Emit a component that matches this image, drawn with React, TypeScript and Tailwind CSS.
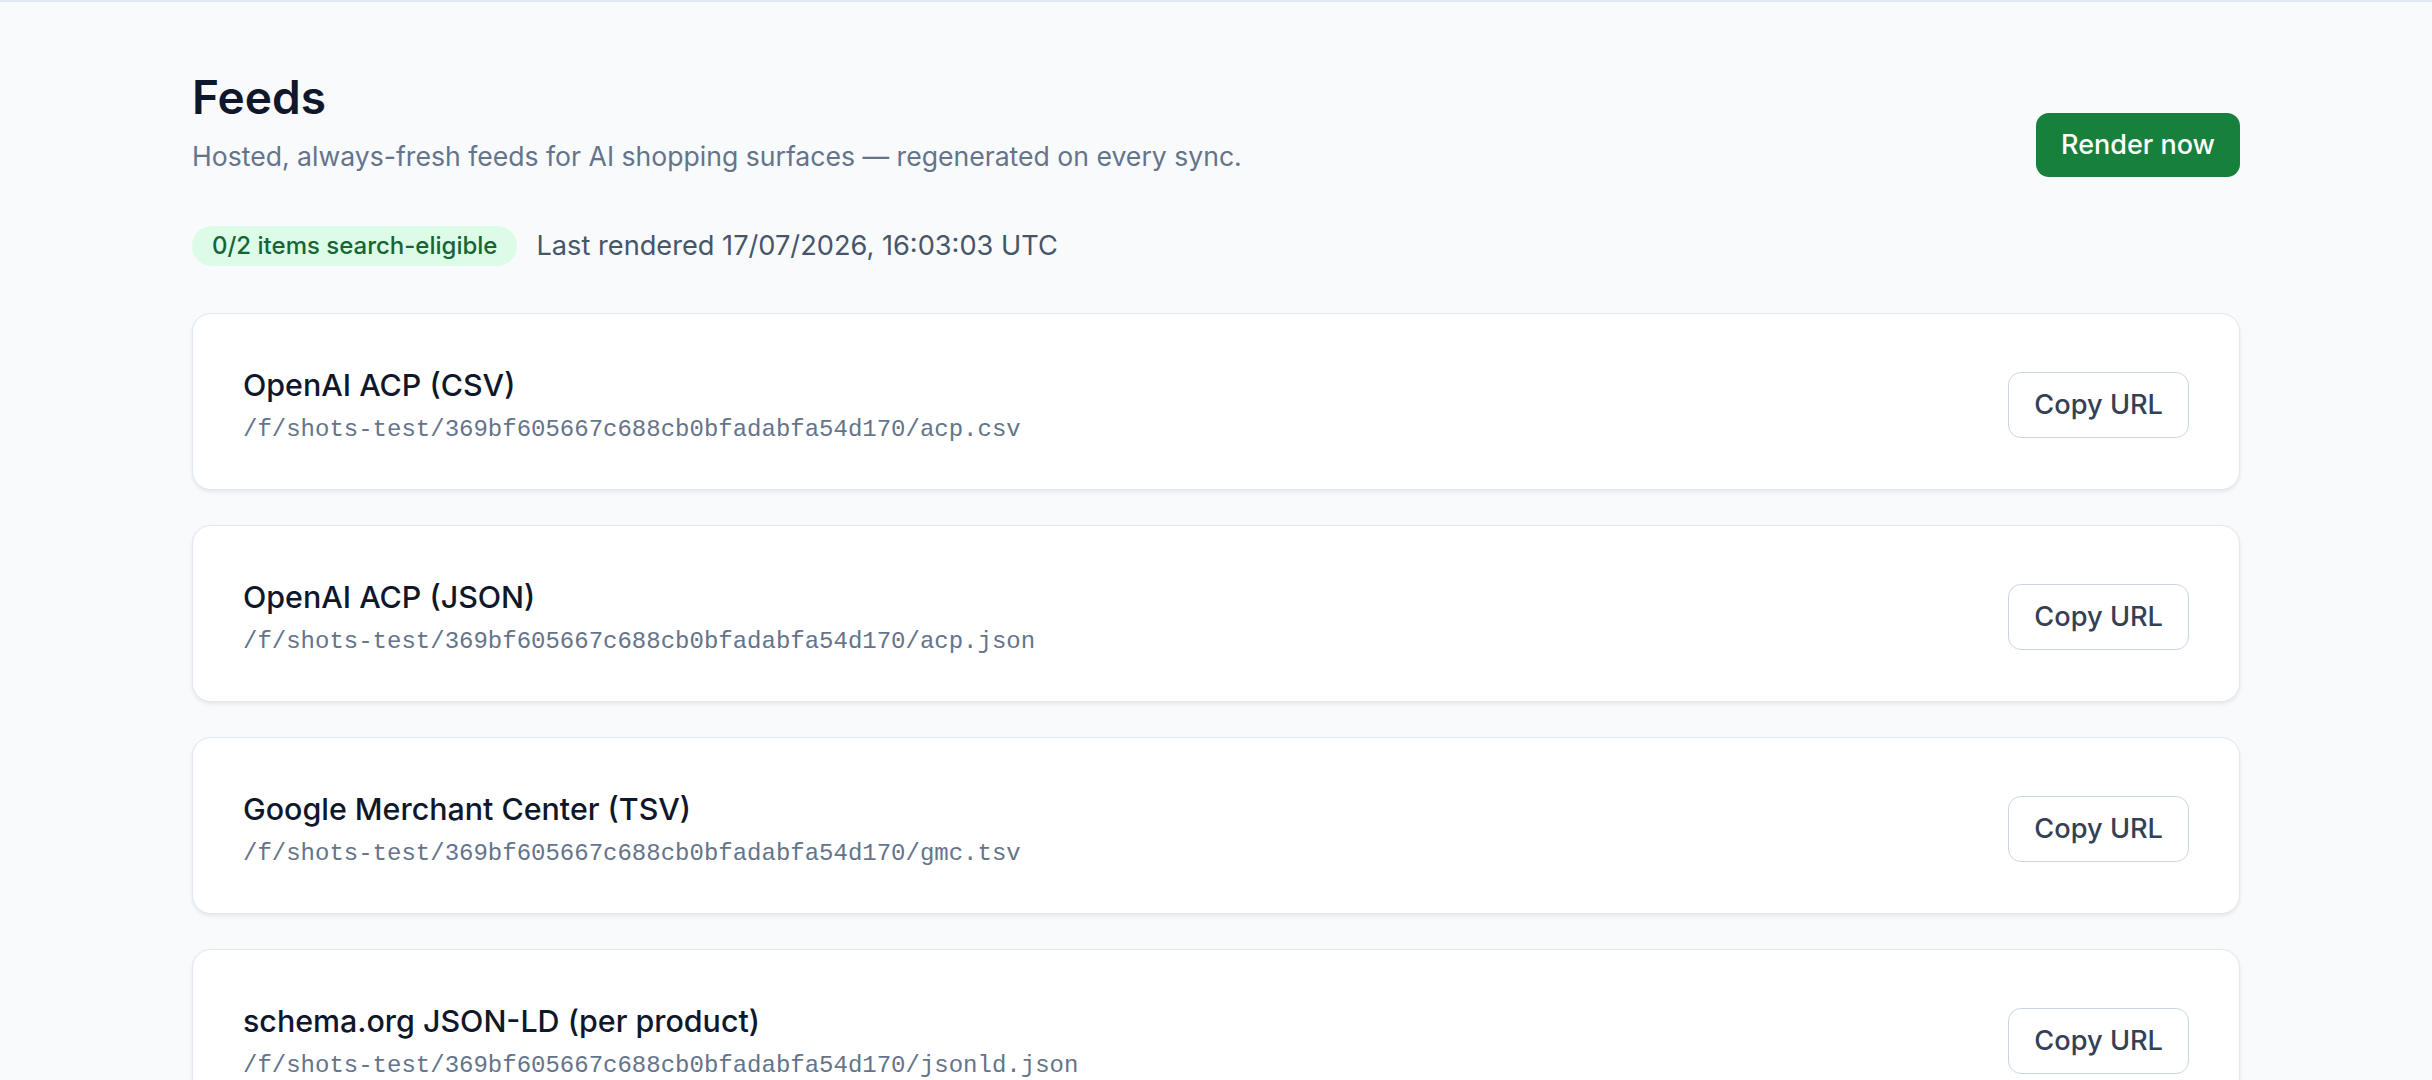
const feeds = [
  {name: "OpenAI ACP (CSV)", path: "/f/shots-test/369bf605667c688cb0bfadabfa54d170/acp.csv"},
  {name: "OpenAI ACP (JSON)", path: "/f/shots-test/369bf605667c688cb0bfadabfa54d170/acp.json"},
  {name: "Google Merchant Center (TSV)", path: "/f/shots-test/369bf605667c688cb0bfadabfa54d170/gmc.tsv"},
  {name: "schema.org JSON-LD (per product)", path: "/f/shots-test/369bf605667c688cb0bfadabfa54d170/jsonld.json"},
];

const FeedCard = ({name, path}: {name: string; path: string}) => (
  <div className="flex items-center justify-between rounded-[19px] border-[1.6px] border-[#e2e8f0] bg-white px-[50px] pt-[51px] pb-[43px] shadow-[0_2px_4px_rgba(15,23,42,0.08)]">
    <div className="flex flex-col">
      <div className="text-[30.4px] leading-[40px] font-medium text-[#0f172a]">{name}</div>
      <div className="mt-[9px] font-['Liberation_Mono',monospace] text-[24px] leading-[32px] text-[#64748b]">{path}</div>
    </div>
    <button className="h-[66px] rounded-[13px] border-[1.6px] border-[#cbd5e1] bg-white px-[25px] text-[27.2px] font-medium text-[#334155]">Copy URL</button>
  </div>
);

const App = () => {
  return (
    <div className="min-h-screen border-t-2 border-[#e2e8f0] bg-[#f8fafc] font-['Inter',sans-serif]">
      <div className="mx-auto max-w-[2048px] pt-[68px] pb-[64px]">
        {/* Header */}
        <div className="flex items-end justify-between">
          <div>
            <h1 className="text-[46px] leading-[54px] font-semibold text-[#0f172a]">Feeds</h1>
            <p className="mt-[15px] text-[26.6px] leading-[35px] text-[#64748b]">Hosted, always-fresh feeds for AI shopping surfaces — regenerated on every sync.</p>
          </div>
          <button className="mb-[-3px] h-[64px] rounded-[13px] bg-[#16803c] px-[25px] text-[27px] font-medium text-white">Render now</button>
        </div>

        <div className="mt-[52px] flex items-center gap-[19px]">
          <span className="flex h-[40px] items-center rounded-full bg-[#dcfce7] px-[20px] text-[24px] font-medium text-[#166534]">0/2 items search-eligible</span>
          <span className="text-[27.2px] text-[#475569]">Last rendered 17/07/2026, 16:03:03 UTC</span>
        </div>

        {/* Feed list */}
        <div className="mt-[46px] flex flex-col gap-[35px]">
          {feeds.map((f) => (
            <FeedCard key={f.path} name={f.name} path={f.path} />
          ))}
        </div>
      </div>
    </div>
  );
};

export default App;
